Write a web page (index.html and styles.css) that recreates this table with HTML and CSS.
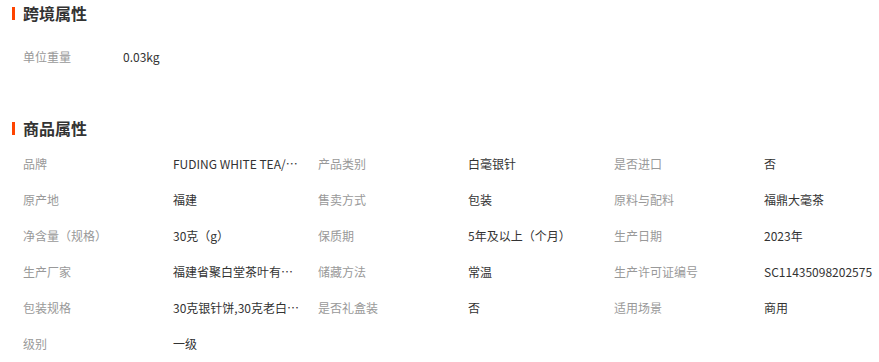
FILE: index.html
```html
<!DOCTYPE html>
<html lang="zh-CN">
<head>
<meta charset="utf-8">
<title>属性</title>
<link rel="stylesheet" href="styles.css">
</head>
<body>
<section class="block block-cross">
  <h2 class="block-title">跨境属性</h2>
  <div class="attr-list attr-list-narrow">
    <div class="attr-label">单位重量</div><div class="attr-value">0.03kg</div>
  </div>
</section>
<section class="block block-goods">
  <h2 class="block-title">商品属性</h2>
  <div class="attr-list">
    <div class="attr-label">品牌</div><div class="attr-value">FUDING WHITE TEA/福鼎白茶</div>
    <div class="attr-label">产品类别</div><div class="attr-value">白毫银针</div>
    <div class="attr-label">是否进口</div><div class="attr-value">否</div>

    <div class="attr-label">原产地</div><div class="attr-value">福建</div>
    <div class="attr-label">售卖方式</div><div class="attr-value">包装</div>
    <div class="attr-label">原料与配料</div><div class="attr-value">福鼎大毫茶</div>

    <div class="attr-label">净含量（规格）</div><div class="attr-value">30克（g）</div>
    <div class="attr-label">保质期</div><div class="attr-value">5年及以上（个月）</div>
    <div class="attr-label">生产日期</div><div class="attr-value">2023年</div>

    <div class="attr-label">生产厂家</div><div class="attr-value">福建省聚白堂茶叶有限公司</div>
    <div class="attr-label">储藏方法</div><div class="attr-value">常温</div>
    <div class="attr-label">生产许可证编号</div><div class="attr-value">SC11435098202575</div>

    <div class="attr-label">包装规格</div><div class="attr-value">30克银针饼,30克老白茶饼</div>
    <div class="attr-label">是否礼盒装</div><div class="attr-value">否</div>
    <div class="attr-label">适用场景</div><div class="attr-value">商用</div>

    <div class="attr-label">级别</div><div class="attr-value">一级</div>
  </div>
</section>
</body>
</html>
```
FILE: styles.css
```css
html, body {
  margin: 0;
  padding: 0;
  background: #fff;
}
body {
  font-family: "Noto Sans CJK SC", "Liberation Sans", sans-serif;
  font-size: 12px;
  color: #333;
  width: 879px;
  height: 362px;
  overflow: hidden;
}
.block-title {
  margin: 0;
  height: 26px;
  display: flex;
  align-items: center;
  padding-left: 12px;
  font-size: 16px;
  font-weight: bold;
  color: #333;
}
.block-title::before {
  content: "";
  width: 3px;
  height: 13px;
  background: #ff4400;
  margin-right: 8px;
}
.block-cross {
  margin-bottom: 40px;
}
.attr-list {
  display: grid;
  grid-template-columns: 150px 145px 150px 146px 150px 138px;
  padding-left: 23px;
  padding-top: 5px;
}
.attr-list-narrow {
  grid-template-columns: 100px 200px;
  padding-top: 13px;
}
.attr-label,
.attr-value {
  height: 36px;
  line-height: 36px;
  white-space: nowrap;
  overflow: hidden;
  text-overflow: ellipsis;
}
.attr-label {
  color: #999;
}
.attr-value {
  color: #333;
  padding-right: 16px;
}
```
